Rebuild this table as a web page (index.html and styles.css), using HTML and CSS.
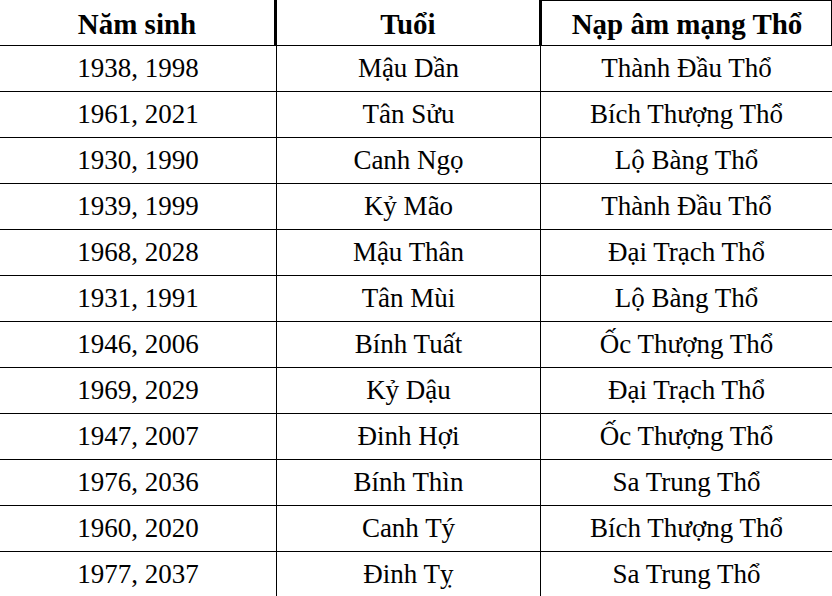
FILE: index.html
```html
<!DOCTYPE html>
<html lang="vi">
<head>
<meta charset="utf-8">
<title>Nạp âm mạng Thổ</title>
<link rel="stylesheet" href="styles.css">
</head>
<body>
<div class="table">
  <div class="row head">
    <div class="cell c1">Năm sinh</div>
    <div class="cell c2">Tuổi</div>
    <div class="cell c3">Nạp âm mạng Thổ</div>
  </div>
  <div class="row"><div class="cell c1">1938, 1998</div><div class="cell c2">Mậu Dần</div><div class="cell c3">Thành Đầu Thổ</div></div>
  <div class="row"><div class="cell c1">1961, 2021</div><div class="cell c2">Tân Sửu</div><div class="cell c3">Bích Thượng Thổ</div></div>
  <div class="row"><div class="cell c1">1930, 1990</div><div class="cell c2">Canh Ngọ</div><div class="cell c3">Lộ Bàng Thổ</div></div>
  <div class="row"><div class="cell c1">1939, 1999</div><div class="cell c2">Kỷ Mão</div><div class="cell c3">Thành Đầu Thổ</div></div>
  <div class="row"><div class="cell c1">1968, 2028</div><div class="cell c2">Mậu Thân</div><div class="cell c3">Đại Trạch Thổ</div></div>
  <div class="row"><div class="cell c1">1931, 1991</div><div class="cell c2">Tân Mùi</div><div class="cell c3">Lộ Bàng Thổ</div></div>
  <div class="row"><div class="cell c1">1946, 2006</div><div class="cell c2">Bính Tuất</div><div class="cell c3">Ốc Thượng Thổ</div></div>
  <div class="row"><div class="cell c1">1969, 2029</div><div class="cell c2">Kỷ Dậu</div><div class="cell c3">Đại Trạch Thổ</div></div>
  <div class="row"><div class="cell c1">1947, 2007</div><div class="cell c2">Đinh Hợi</div><div class="cell c3">Ốc Thượng Thổ</div></div>
  <div class="row"><div class="cell c1">1976, 2036</div><div class="cell c2">Bính Thìn</div><div class="cell c3">Sa Trung Thổ</div></div>
  <div class="row"><div class="cell c1">1960, 2020</div><div class="cell c2">Canh Tý</div><div class="cell c3">Bích Thượng Thổ</div></div>
  <div class="row"><div class="cell c1">1977, 2037</div><div class="cell c2">Đinh Tỵ</div><div class="cell c3">Sa Trung Thổ</div></div>
</div>
</body>
</html>
```
FILE: styles.css
```css
html, body {
  margin: 0;
  padding: 0;
  background: #fff;
}
body {
  width: 832px;
  height: 596px;
  overflow: hidden;
  font-family: "Liberation Serif", "Times New Roman", serif;
  font-size: 27px;
  color: #000;
}
.table {
  display: flex;
  flex-direction: column;
}
.row {
  display: flex;
  height: 46px;
  border-bottom: 1px solid #000;
  box-sizing: border-box;
}
.cell {
  box-sizing: border-box;
  text-align: center;
  line-height: 45px;
  white-space: nowrap;
}
.c1 { width: 276px; }
.c2 { width: 264px; border-left: 1px solid #000; }
.c3 { width: 292px; border-left: 1px solid #000; }

.head {
  height: 46px;
  font-weight: bold;
  font-size: 29px;
}
.head .cell {
  padding-top: 3px;
  line-height: 42px;
}
.head .c1 { width: 274px; }
.head .c2 { width: 265px; border-left: 3px solid #000; }
.head .c3 {
  width: 293px;
  border-left: 3px solid #000;
  box-shadow: inset 0 1px 0 #000, inset -1px 0 0 #000;
}
```
